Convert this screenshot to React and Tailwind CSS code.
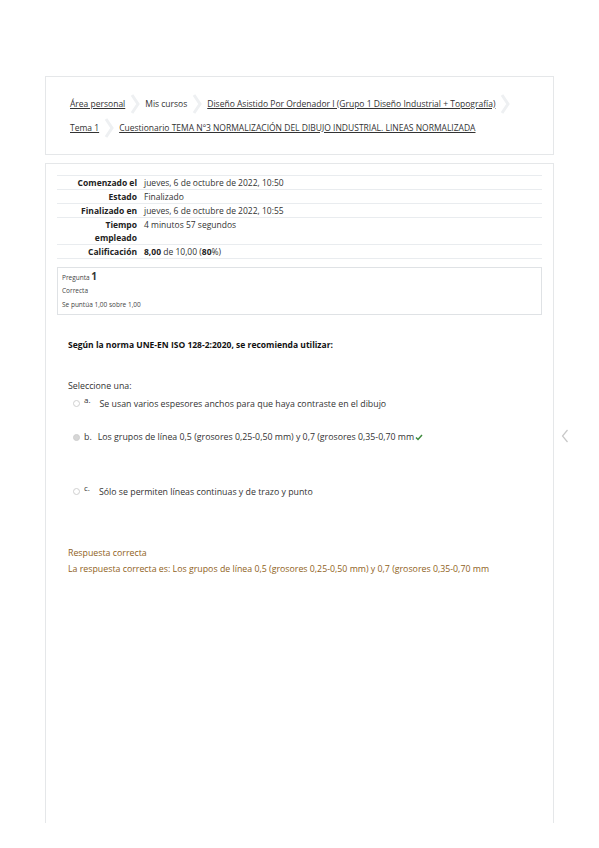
import React from "react";

const Sep = () => (
  <svg width="10" height="20" viewBox="0 0 10 20" className="mx-[5px] shrink-0">
    <polyline points="2,1 8,10 2,19" fill="none" stroke="#eef0f2" strokeWidth="3" />
  </svg>
);

const Row = ({ label, children }) => (
  <div className="flex border-t border-[#e9ecef]">
    <div className="w-[80px] pl-[8px] shrink-0 text-right font-bold text-[#222] leading-[13px]">{label}</div>
    <div className="pl-[7px] text-[#333] leading-[13px]">{children}</div>
  </div>
);

const Radio = ({ checked }) => (
  <span
    className={`inline-block w-[7px] h-[7px] rounded-full border ${
      checked ? "border-[#cfcfcf] bg-[#d6d6d6]" : "border-[#d0d0d0] bg-white"
    }`}
  />
);

export default function App() {
  return (
    <div
      className="w-[599px] h-[848px] bg-white relative overflow-hidden"
      style={{ fontFamily: '"Open Sans", "Liberation Sans", sans-serif' }}
    >
      <div className="pt-[76px] px-[45px]">
        {/* Breadcrumb card */}
        <div className="border border-[#e5e7e9] h-[79px] pl-[24px] pt-[16px] text-[8.5px] text-[#333]">
          <div className="flex items-center h-[22px]">
            <span className="underline">Área personal</span>
            <Sep />
            <span>Mis cursos</span>
            <Sep />
            <span className="underline">Diseño Asistido Por Ordenador I (Grupo 1 Diseño Industrial + Topografía)</span>
            <Sep />
          </div>
          <div className="flex items-center h-[22px] mt-[2px]">
            <span className="underline">Tema 1</span>
            <Sep />
            <span className="underline">Cuestionario TEMA Nº3 NORMALIZACIÓN DEL DIBUJO INDUSTRIAL. LINEAS NORMALIZADA</span>
          </div>
        </div>

        {/* Main card */}
        <div className="mt-[8px] border-t border-l border-r border-[#e5e7e9] h-[660px] px-[11px] pt-[11px] text-[8.5px]">
          <div className="border-b border-[#e9ecef]">
            <Row label="Comenzado el">jueves, 6 de octubre de 2022, 10:50</Row>
            <Row label="Estado">Finalizado</Row>
            <Row label="Finalizado en">jueves, 6 de octubre de 2022, 10:55</Row>
            <Row label="Tiempo empleado">4 minutos 57 segundos</Row>
            <Row label="Calificación">
              <b className="text-[#222]">8,00</b> de 10,00 (<b className="text-[#222]">80</b>%)
            </Row>
          </div>

          <div className="mt-[8px] border border-[#dfe2e5] h-[48px] px-[4px] pt-[2px] text-[6.5px] text-[#444]">
            <div className="leading-[12px]">
              Pregunta <span className="text-[10px] font-bold text-[#333]">1</span>
            </div>
            <div className="leading-[14px]">Correcta</div>
            <div className="leading-[14px] text-[#444]">Se puntúa 1,00 sobre 1,00</div>
          </div>

          <div className="pl-[11px] pt-[24px] text-[8.8px]">
            <div className="font-bold text-[#111] text-[8.5px]">Según la norma UNE-EN ISO 128-2:2020, se recomienda utilizar:</div>

            <div className="mt-[28px] text-[#333]">Seleccione una:</div>

            <div className="mt-[2px] pl-[5px] flex items-start text-[#333]">
              <div className="pt-[3px] mr-[4px]"><Radio /></div>
              <span className="text-[8px] mr-[9px] leading-[10px]">a.</span>
              <span className="mt-[3px]">Se usan varios espesores anchos para que haya contraste en el dibujo</span>
            </div>

            <div className="mt-[20px] pl-[5px] flex items-center text-[#333]">
              <div className="mr-[4px] flex"><Radio checked /></div>
              <span className="mr-[6px]">b.</span>
              <span>Los grupos de línea 0,5 (grosores 0,25-0,50 mm) y 0,7 (grosores 0,35-0,70 mm</span>
              <svg width="8" height="7" viewBox="0 0 8 7" className="ml-[1px]">
                <polyline points="1,3.5 3,5.5 7,1" fill="none" stroke="#3d8a3d" strokeWidth="1.5" />
              </svg>
            </div>

            <div className="mt-[39px] pl-[5px] flex items-start text-[#333]">
              <div className="pt-[3px] mr-[4px]"><Radio /></div>
              <span className="text-[8px] mr-[9px] leading-[10px]">c.</span>
              <span className="mt-[3px]">Sólo se permiten líneas continuas y de trazo y punto</span>
            </div>

            <div className="mt-[47px] text-[#8f6222]">
              <div className="leading-[12px]">Respuesta correcta</div>
              <div className="mt-[4px] leading-[12px]">
                La respuesta correcta es: Los grupos de línea 0,5 (grosores 0,25-0,50 mm) y 0,7 (grosores 0,35-0,70 mm
              </div>
            </div>
          </div>
        </div>
      </div>

      <svg width="8" height="14" viewBox="0 0 8 14" className="absolute left-[561px] top-[429px]">
        <polyline points="6.5,1 1.5,7 6.5,13" fill="none" stroke="#c8c8c8" strokeWidth="1.2" />
      </svg>
    </div>
  );
}
